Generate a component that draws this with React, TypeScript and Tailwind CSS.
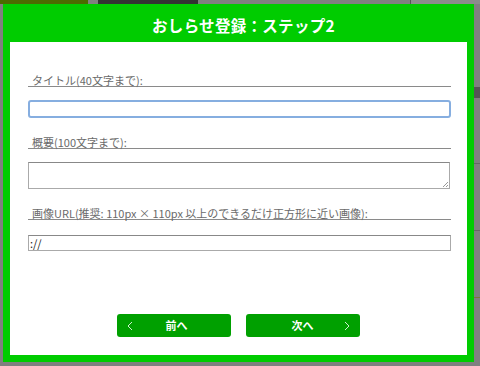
import React from "react";

const font = { fontFamily: '"Noto Sans CJK JP", "Noto Sans", sans-serif' };

function FieldLabel({ text }: { text: string }) {
  return (
    <div className="h-[14px] flex-none border-b border-[#8a8a8a] pl-1 pt-[1px] text-[11px] leading-[12px] text-[#6a6a6a]">
      {text}
    </div>
  );
}

export default function App() {
  return (
    <div className="relative h-[366px] w-[480px] overflow-hidden bg-[#808080]" style={font}>
      {/* page behind the overlay */}
      <div className="flex h-[4px]">
        <div className="w-[88px] bg-[#4b6a00]" />
        <div className="w-[10px]" />
        <div className="w-[100px] bg-[#333]" />
        <div className="flex-1" />
        <div className="w-[70px] border-l border-[#555] bg-[#8c8c8c]" />
      </div>
      <div className="absolute right-0 top-[87px] h-[11px] w-[6px] bg-[#555]" />
      <div className="absolute right-0 top-[163px] h-px w-[6px] bg-[#666]" />
      <div className="absolute right-0 top-[230px] h-px w-[6px] bg-[#666]" />
      <div className="absolute right-0 top-[297px] h-px w-[6px] bg-[#7a7a3a]" />

      {/* modal */}
      <div className="absolute left-[3px] top-[4px] flex h-[358px] w-[471px] flex-col bg-[#00cc00] px-[7px] pb-[7px]">
        <div className="flex h-[38px] flex-none items-center justify-center pl-[10px] pt-[6px] text-[15.5px] font-bold tracking-[0.3px] text-white">
          おしらせ登録：ステップ2
        </div>
        <div className="flex flex-1 flex-col bg-white pl-[18px] pr-[16px]">
          <div className="mt-[31px]">
            <FieldLabel text="タイトル(40文字まで):" />
          </div>
          <div className="mt-[13px] h-[18px] flex-none rounded-[3px] border-2 border-[#86aee0] bg-white" />

          <div className="mt-[17px]">
            <FieldLabel text="概要(100文字まで):" />
          </div>
          <div className="relative mt-[13px] mr-[1px] h-[27px] flex-none border border-[#aaa] border-t-[#888] bg-white">
            <svg className="absolute bottom-[1px] right-[1px]" width="6" height="6" viewBox="0 0 6 6">
              <path d="M1 6 L6 1 M4 6 L6 4" stroke="#999" strokeWidth="1" />
            </svg>
          </div>

          <div className="mt-[17px]">
            <FieldLabel text="画像URL(推奨: 110px × 110px 以上のできるだけ正方形に近い画像):" />
          </div>
          <div className="mt-[15px] flex h-[16px] flex-none items-center border border-[#aaa] border-t-[#888] bg-white pl-[1px] text-[11px] text-[#222]">
            ://
          </div>

          <div className="mt-[63px] flex flex-none justify-center gap-[15px] pr-[3px]">
            <button className="relative flex h-[23px] w-[114px] items-center justify-center rounded-[3px] bg-[#00a000] pl-[6px] text-[11px] font-bold text-white">
              <span className="absolute left-[10px] text-[#cfeecf]">
                <svg width="6" height="10" viewBox="0 0 6 10">
                  <path d="M5 1 L1 5 L5 9" stroke="currentColor" strokeWidth="1" fill="none" />
                </svg>
              </span>
              前へ
            </button>
            <button className="relative flex h-[23px] w-[114px] items-center justify-center rounded-[3px] bg-[#00a000] text-[11px] font-bold text-white">
              次へ
              <span className="absolute right-[10px] text-[#cfeecf]">
                <svg width="6" height="10" viewBox="0 0 6 10">
                  <path d="M1 1 L5 5 L1 9" stroke="currentColor" strokeWidth="1" fill="none" />
                </svg>
              </span>
            </button>
          </div>
        </div>
      </div>
    </div>
  );
}
